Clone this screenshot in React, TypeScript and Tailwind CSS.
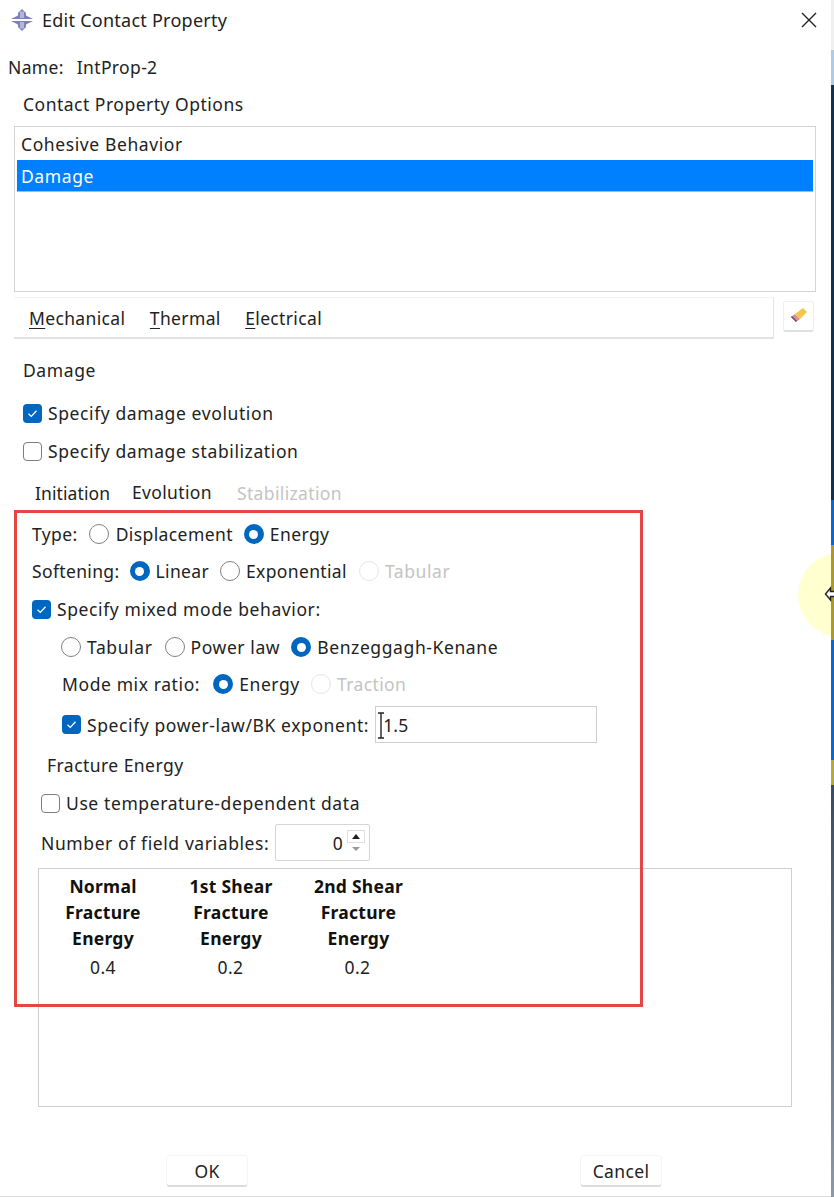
const font = "font-['Noto_Sans',sans-serif]";

function Check({ on }: { on?: boolean }) {
  if (on) {
    return (
      <span className="w-[19px] h-[19px] rounded-[4px] bg-[#0067c0] flex items-center justify-center shrink-0">
        <svg width="13" height="13" viewBox="0 0 13 13" fill="none" stroke="white" strokeWidth="1.3">
          <path d="M2.5 6.8 L5.3 9.4 L10.5 3.8" />
        </svg>
      </span>
    );
  }
  return <span className="w-[19px] h-[19px] rounded-[4px] border-[1.5px] border-[#7d7d7d] bg-white shrink-0" />;
}

function Radio({ on, off }: { on?: boolean; off?: boolean }) {
  if (on) {
    return (
      <span className="w-[20px] h-[20px] rounded-full bg-[#0067c0] flex items-center justify-center shrink-0">
        <span className="w-[9px] h-[9px] rounded-full bg-white" />
      </span>
    );
  }
  if (off) return <span className="w-[20px] h-[20px] rounded-full border border-[#e6e6e6] shrink-0" />;
  return <span className="w-[20px] h-[20px] rounded-full border-[1.5px] border-[#808080] shrink-0" />;
}

function Btn({ label }: { label: string }) {
  return (
    <div className="w-[82px] h-[32px] border border-[#f5f5f5] border-b-2 border-b-[#dcdcdc] rounded-[4px] flex items-center justify-center tracking-[0.35px]">
      {label}
    </div>
  );
}

function Head({ a, className }: { a: string; className: string }) {
  return (
    <div className={"text-center font-bold text-[#111] leading-[26px] tracking-[0.25px] " + className}>
      <div>{a}</div>
      <div>Fracture</div>
      <div>Energy</div>
    </div>
  );
}

export default function App() {
  return (
    <div className={"relative w-[834px] h-[1197px] overflow-hidden bg-white text-[#222] text-[17.5px] leading-[24px] tracking-[0.6px] " + font}>
      <div className="relative h-full w-[831px] bg-white border-b border-b-[#dcdcdc]">
        {/* title */}
        <div className="h-[40px] pl-[10px] pr-[13px] flex items-center">
          <svg width="24" height="24" viewBox="0 0 24 24" className="mr-[8px]">
            <path d="M12 1 L16 5 V7.5 L23 11 H1 L8 7.5 V5 Z" fill="#7f7fbb" />
            <path d="M12 23 L16 19 V16.5 L23 13 H1 L8 16.5 V19 Z" fill="#7f7fbb" />
            <rect x="10" y="3.5" width="4" height="6.5" fill="#b5b5d8" />
            <rect x="10" y="14" width="4" height="6.5" fill="#b5b5d8" />
          </svg>
          <span className="text-[18px] tracking-[0.25px]">Edit Contact Property</span>
          <svg className="ml-auto" width="18" height="18" viewBox="0 0 18 18" stroke="#222" strokeWidth="1.4" fill="none">
            <path d="M2 2 L16 16 M16 2 L2 16" />
          </svg>
        </div>

        <div className="pl-[8px] mt-[15px] h-[24px] flex gap-[13px] tracking-[0.35px]">
          <span>Name:</span>
          <span>IntProp-2</span>
        </div>
        <div className="pl-[23px] mt-[13px] h-[24px] tracking-[0.5px]">Contact Property Options</div>

        {/* options list */}
        <div className="ml-[14px] mt-[10px] w-[802px] h-[166px] border-[1.5px] border-[#d4d4d4] pl-[2px] pt-[1px]">
          <div className="h-[32px] pl-[4px] flex items-center">Cohesive Behavior</div>
          <div className="w-[796px] h-[32px] pl-[4px] flex items-center bg-[#0080ff] text-white border-b border-b-[#7cc8ff]">Damage</div>
        </div>

        {/* category menu */}
        <div className="flex mt-[5px] h-[42px]">
          <div className="ml-[14px] w-[760px] border-t border-r border-b-2 border-[#e3e3e3] border-t-[#f3f3f3] flex items-center pl-[15px] gap-[24.5px] tracking-[0.35px]">
            <span><span className="underline underline-offset-[3px]">M</span>echanical</span>
            <span><span className="underline underline-offset-[3px]">T</span>hermal</span>
            <span><span className="underline underline-offset-[3px]">E</span>lectrical</span>
          </div>
          <div className="ml-[9px] mt-[4px] w-[31px] h-[31px] border border-[#f0f0f0] border-b-2 border-b-[#e0e0e0] rounded-[3px] flex items-center justify-center">
            <svg width="20" height="20" viewBox="0 0 20 20">
              <path d="M7 16 L2 11 L6 8 L11 13 Z" fill="#e58b96" />
              <path d="M6 8 L11 13 L18 6 L14 2 Z" fill="#f2c64b" />
              <path d="M8 15 L7 16 L2 11 L3 10 Z" fill="#555" />
            </svg>
          </div>
        </div>

        <div className="pl-[23px] mt-[19px] h-[24px]">Damage</div>
        <div className="pl-[23px] mt-[19px] h-[24px] flex items-center gap-[6px]"><Check on />Specify damage evolution</div>
        <div className="pl-[23px] mt-[14px] h-[24px] flex items-center gap-[6px]"><Check />Specify damage stabilization</div>

        {/* tabs */}
        <div className="pl-[35px] mt-[18px] h-[24px] flex tracking-[0.35px]">
          <span className="w-[97px] tracking-[0.1px]">Initiation</span>
          <span className="w-[105px] -mt-[1px]">Evolution</span>
          <span className="text-[#c4c4c4]">Stabilization</span>
        </div>

        {/* evolution form */}
        <div className="pl-[32px] mt-[17px] h-[24px] flex items-center tracking-[0.4px]">
          <span className="mr-[11px]">Type:</span>
          <Radio /><span className="ml-[7px] mr-[11px]">Displacement</span>
          <Radio on /><span className="ml-[6px]">Energy</span>
        </div>
        <div className="pl-[32px] mt-[13px] h-[24px] flex items-center tracking-[0.35px]">
          <span className="mr-[10px]">Softening:</span>
          <Radio on /><span className="ml-[6px] mr-[11px]">Linear</span>
          <Radio /><span className="ml-[6px] mr-[12px]">Exponential</span>
          <Radio off /><span className="ml-[6px] text-[#c4c4c4] tracking-[0.6px]">Tabular</span>
        </div>
        <div className="pl-[32px] mt-[14px] h-[24px] flex items-center gap-[6px]"><Check on />Specify mixed mode behavior:</div>
        <div className="pl-[61px] mt-[14px] h-[24px] flex items-center">
          <Radio /><span className="ml-[6px] mr-[12px]">Tabular</span>
          <Radio /><span className="ml-[6px] mr-[11px]">Power law</span>
          <Radio on /><span className="ml-[6px]">Benzeggagh-Kenane</span>
        </div>
        <div className="pl-[62px] mt-[13px] h-[24px] flex items-center">
          <span className="mr-[13px]">Mode mix ratio:</span>
          <Radio on /><span className="ml-[6px] mr-[11px]">Energy</span>
          <Radio off /><span className="ml-[6px] text-[#c4c4c4] tracking-[0.4px]">Traction</span>
        </div>
        <div className="pl-[62px] mt-[10px] h-[37px] flex items-center">
          <Check on /><span className="ml-[6px] mr-[6px]">Specify power-law/BK exponent:</span>
          <div className="relative w-[222px] h-[37px] border border-[#cfcfcf] flex items-center pl-[7px] tracking-[0.2px]">
            1.5
            <svg className="absolute left-[1px] top-[5px]" width="8" height="27" viewBox="0 0 8 27" fill="none" stroke="#222" strokeWidth="1.4">
              <path d="M1 1 H7 M4 1 V26 M1 26 H7" />
            </svg>
          </div>
        </div>
        <div className="pl-[47px] mt-[10px] h-[24px] tracking-[0.45px]">Fracture Energy</div>
        <div className="pl-[41px] mt-[14px] h-[24px] flex items-center gap-[6px]"><Check />Use temperature-dependent data</div>
        <div className="pl-[41px] mt-[9px] h-[37px] flex items-center">
          <span className="mr-[6px]">Number of field variables:</span>
          <div className="w-[95px] h-[37px] border border-[#d6d6d6] rounded-[2px] flex items-center justify-end pr-[4px]">
            <span className="mr-[4px]">0</span>
            <div className="w-[18px] h-[26px] flex flex-col items-center">
              <div className="w-full h-[13px] border border-[#e0e0e0] flex items-center justify-center">
                <span className="w-0 h-0 border-x-[4px] border-x-transparent border-b-[5px] border-b-[#222]" />
              </div>
              <div className="h-[13px] flex items-center justify-center">
                <span className="w-0 h-0 border-x-[4px] border-x-transparent border-t-[4px] border-t-[#999]" />
              </div>
            </div>
          </div>
        </div>

        {/* table */}
        <div className="ml-[38px] mt-[7px] w-[754px] h-[239px] border-[1.5px] border-[#cfcfcf] pt-[4px] tracking-[0.35px]">
          <div className="flex">
            <Head a="Normal" className="w-[128px]" />
            <Head a="1st Shear" className="w-[128px]" />
            <Head a="2nd Shear" className="w-[127px]" />
          </div>
          <div className="flex mt-[3px] h-[26px] items-center">
            <div className="w-[128px] text-center">0.4</div>
            <div className="w-[127px] text-center">0.2</div>
            <div className="w-[127px] text-center">0.2</div>
          </div>
        </div>

        {/* bottom buttons */}
        <div className="flex justify-between pl-[166px] pr-[169px] mt-[48px]">
          <Btn label="OK" />
          <Btn label="Cancel" />
        </div>

        <div className="absolute left-[14px] top-[510px] w-[629px] h-[497px] border-[3px] border-[#e64545]" />
      </div>

      {/* window behind the dialog, cursor highlight on top */}
      <div className="absolute left-[798px] top-[553px] w-[84px] h-[84px] rounded-full bg-[#ffffd0]" />
      <div className="absolute right-0 top-0 w-[3px] h-full flex flex-col">
        <div className="h-[50px] bg-[#f0f0f0]" />
        <div className="h-[35px] bg-[#b0cbe6]" />
        <div className="h-[415px] bg-[#14304f]" />
        <div className="h-[45px] bg-[#0b67c9]" />
        <div className="h-[95px] bg-[#a89a2e]" />
        <div className="h-[120px] bg-[#0b67c9]" />
        <div className="h-[25px] bg-[#b5a93a]" />
        <div className="flex-1 bg-gradient-to-b from-[#3e4a60] to-[#8f99a5]" />
      </div>
      <svg className="absolute left-[824px] top-[585px]" width="10" height="18" viewBox="0 0 10 18" fill="white" stroke="#222" strokeWidth="1.4">
        <path d="M1.5 9 L6.5 3 V6.5 H12 V11.5 H6.5 V15 Z" />
      </svg>
    </div>
  );
}
